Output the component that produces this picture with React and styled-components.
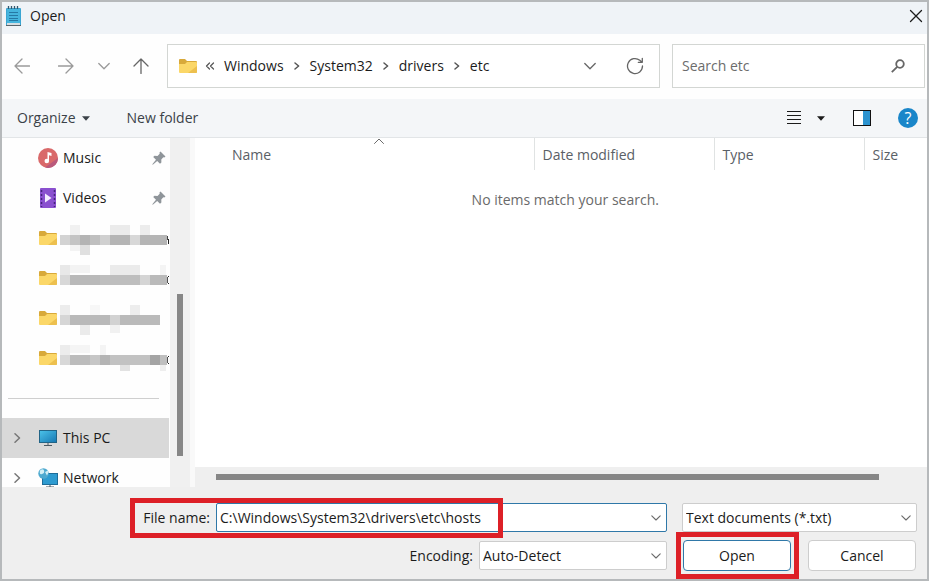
import React from 'react';
import styled, { createGlobalStyle } from 'styled-components';

const GlobalStyle = createGlobalStyle`
	* {
		box-sizing: border-box;
	}

	body {
		margin: 0;
		overflow: hidden;
	}

	body, button, input, select, table {
		font-family: 'Open Sans', 'Noto Sans', sans-serif;
		font-size: 14px;
		line-height: 20px;
		color: #1b1b1b;
	}

	button {
		padding: 0;
		border: none;
		background: none;
		cursor: pointer;
	}

	svg {
		display: block;
		flex: none;
	}
`;

const Dialog = styled.div`
	display: flex;
	flex-direction: column;
	height: 100vh;
	border: 2px solid #b6b9bb;
	background-color: #fefefe;
`;

const TitleBar = styled.header`
	display: flex;
	align-items: center;
	gap: 8px;
	height: 32px;
	padding: 0 4px 4px;
	background-color: #eff3f7;
`;

const Title = styled.h1`
	flex: 1;
	margin: 0;
	font-size: 14px;
	font-weight: 400;
`;

const NavBar = styled.nav`
	display: flex;
	align-items: center;
	gap: 12px;
	height: 65px;
	padding: 0 2px 2px 0;
`;

const NavButtons = styled.div`
	display: grid;
	grid-template-columns: 40px 48px 28px 46px;
	height: 44px;
	margin-right: -9px;
`;

const IconButton = styled.button`
	display: flex;
	align-items: center;
	justify-content: center;
	color: ${props => props.$color || '#1b1b1b'};
`;

const AddressBar = styled.div`
	display: flex;
	flex: 1;
	align-items: center;
	gap: 7px;
	height: 44px;
	padding: 0 15px 0 10px;
	border: 1px solid #d3d6d3;
	background-color: white;
	color: #555;
`;

const Breadcrumbs = styled.div`
	display: flex;
	align-items: center;
	gap: 10px;
	margin-left: 2px;
`;

const AddressActions = styled.div`
	display: flex;
	gap: 30px;
	margin-left: auto;
`;

const SearchBox = styled.label`
	display: flex;
	align-items: center;
	width: 253px;
	height: 44px;
	padding: 0 18px 0 9px;
	border: 1px solid #d3d6d3;
	background-color: white;
`;

const SearchInput = styled.input`
	flex: 1;
	min-width: 0;
	padding: 0;
	border: none;
	outline: none;
	background: none;

	&::placeholder {
		color: #6c6c6c;
		opacity: 1;
	}
`;

const Toolbar = styled.div`
	display: flex;
	align-items: center;
	height: 39px;
	padding: 0 9px 0 15px;
	border-bottom: 1px solid #e2e5e7;
	background-color: #f4f6f8;
`;

const ToolbarButton = styled.button`
	display: flex;
	align-items: center;
	gap: 6px;
	margin-right: 37px;
	color: #3b4248;
`;

const ToolbarIcons = styled.div`
	display: flex;
	align-items: center;
	gap: 27px;
	margin-left: auto;
`;

const ViewButton = styled(IconButton)`
	gap: 16px;
	padding-right: 1px;
`;

const Body = styled.div`
	display: flex;
	flex: 1;
	min-height: 0;
`;

const Sidebar = styled.aside`
	width: 168px;
	overflow: hidden;
`;

const SidebarItem = styled.button`
	display: grid;
	grid-template-columns: 10px 20px 1fr auto;
	align-items: center;
	column-gap: 16px;
	width: 167px;
	height: 40px;
	padding: 0 3px 0 10px;
	text-align: left;
	color: #777;
	background-color: ${props => (props.$selected ? '#d9d9d9' : 'transparent')};
`;

const ItemLabel = styled.span`
	margin-left: -11px;
	color: #1b1b1b;
`;

const HiddenItem = styled.div`
	display: flex;
	align-items: center;
	gap: 2px;
	width: 168px;
	height: 40px;
	padding-left: 36px;
`;

const Divider = styled.hr`
	width: 151px;
	height: 1px;
	margin: 20px 0 19px 6px;
	border: none;
	background-color: #cfcfcf;
`;

const VerticalTrack = styled.div`
	display: flex;
	flex-direction: column;
	justify-content: flex-end;
	align-items: center;
	width: 20px;
	padding-bottom: 31px;
	background-color: #f0f0f0;
`;

const VerticalThumb = styled.div`
	width: 6px;
	height: 51%;
	background-color: #868686;
`;

const FilePane = styled.main`
	display: flex;
	flex: 1;
	flex-direction: column;
	border-left: 5px solid #f9f9f9;
`;

const FileArea = styled.div`
	flex: 1;
	padding-left: 28px;
	background-color: white;
`;

const FileTable = styled.table`
	width: 100%;
	table-layout: fixed;
	border-collapse: collapse;
`;

const HeaderCell = styled.th`
	position: relative;
	width: ${props => props.$width || 'auto'};
	height: 32px;
	padding: 2px 8px 0;
	border-left: 1px solid ${props => (props.$width ? '#e0e3e3' : 'transparent')};
	font-weight: 400;
	text-align: left;
	color: #5a6066;
`;

const SortMark = styled.span`
	position: absolute;
	top: 0;
	left: 50%;
	transform: translateX(-50%);
	color: #6b6b6b;
`;

const EmptyCell = styled.td`
	padding: 20px 20px 0 0;
	text-align: center;
	color: #6a6a6a;
`;

const HorizontalTrack = styled.div`
	display: flex;
	align-items: center;
	height: 20px;
	padding: 0 48px 0 21px;
	background-color: #efefef;
`;

const HorizontalThumb = styled.div`
	flex: 1;
	height: 6px;
	background-color: #868686;
`;

const Footer = styled.footer`
	display: grid;
	grid-template-columns: 214px 1fr 235px;
	grid-template-rows: 29px 31px;
	row-gap: 8px;
	align-items: center;
	padding: 16px 10px 8px 0;
	background-color: #efefef;
`;

const FileNameGroup = styled.div`
	position: relative;
	display: grid;
	grid-column: 1 / 3;
	grid-template-columns: 214px 1fr;
	align-items: center;
	margin-right: 15px;
`;

const FieldLabel = styled.label`
	padding-right: 6px;
	text-align: right;
`;

const Field = styled.div`
	position: relative;
	display: flex;
	width: ${props => props.$width || 'auto'};
	height: 29px;
	border: 1px solid ${props => (props.$active ? '#2f78a8' : '#cdcdcd')};
	border-radius: 2px;
	background-color: white;
`;

const TextInput = styled.input`
	flex: 1;
	min-width: 0;
	padding: 0 3px;
	border: none;
	outline: none;
	background: none;
`;

const Select = styled.select`
	flex: 1;
	width: 100%;
	padding: 0 24px 0 3px;
	border: none;
	outline: none;
	appearance: none;
	background: none;
`;

const FieldArrow = styled.span`
	position: absolute;
	top: 10px;
	right: 5px;
	color: #6a6a6a;
	pointer-events: none;
`;

const ArrowButton = styled(IconButton)`
	width: 20px;
`;

const EncodingGroup = styled.div`
	display: flex;
	grid-column: 1 / 3;
	align-items: center;
	justify-content: flex-end;
	margin-right: 15px;
`;

const Actions = styled.div`
	display: grid;
	grid-template-columns: 1fr 1fr;
	column-gap: 17px;
	padding: 0 1px;
`;

const ActionSlot = styled.div`
	position: relative;
	display: grid;
`;

const ActionButton = styled.button`
	height: 31px;
	border: 1px solid ${props => (props.$primary ? '#2f78a8' : '#cdcdcd')};
	border-radius: 4px;
	background-color: white;
`;

const Highlight = styled.span`
	position: absolute;
	border: 5px solid #dd2027;
	pointer-events: none;
`;

const NameHighlight = styled(Highlight)`
	inset: -5px auto -6px 128px;
	width: 373px;
`;

const OpenHighlight = styled(Highlight)`
	inset: -8px -8px -8px -7px;
`;

const Stroke = ({ width, height, d, weight = 1.3 }) => (
	<svg
		width={width}
		height={height}
		viewBox={`0 0 ${width} ${height}`}
		fill="none"
		stroke="currentColor"
		strokeWidth={weight}
		strokeLinecap="round"
		strokeLinejoin="round"
		aria-hidden="true"
	>
		<path d={d} />
	</svg>
);

const ChevronDown = () => <Stroke width={12} height={8} d="M.8 1.500L6 6.700l5.200-5.200" weight={1.3} />;
const FieldChevron = () => <Stroke width={10} height={8} d="M.8 1.800L5 6l4.200-4.200" weight={1.1} />;
const ChevronRight = () => <Stroke width={6} height={10} d="M1 2l3.600 3L1 8" weight={1.5} />;
const TreeChevron = () => <Stroke width={10} height={10} d="M3 .8L7.500 5 3 9.200" weight={1.5} />;

const Caret = () => (
	<svg width="8" height="5" viewBox="0 0 8 5" fill="currentColor" aria-hidden="true">
		<path d="M0 .3h8L4 4.800z" />
	</svg>
);

const NotepadIcon = () => (
	<svg width="16" height="21" viewBox="0 0 16 21" aria-hidden="true">
		<rect x="0" y="2" width="15" height="18" rx="1" fill="#3aa5d2" />
		<rect x="1" y="3" width="13" height="14" fill="#45b4dd" />
		<rect x="1" y="17" width="13" height="2" fill="#d5dde1" />
		<path d="M0 19.500h15" stroke="#59636a" />
		<path d="M3 6.500h9M3 9.500h9M3 12.500h9M3 14.500h9" stroke="#2578a4" />
		<path d="M2.500 0v3M5.500 0v3M8.500 0v3M11.500 0v3" stroke="#31596f" strokeWidth="1.300" />
	</svg>
);

const FolderIcon = () => (
	<svg width="20" height="16" viewBox="0 0 20 16" aria-hidden="true">
		<path d="M1 2q0-1 1-1h5l2 2h9q1 0 1 1v3H1z" fill="#d8a93a" />
		<path d="M1 6h6l2-2h9q1 0 1 1v9q0 1-1 1H2q-1 0-1-1z" fill="#fbd768" />
		<path d="M19 8v6q0 1-1 1h-8z" fill="#edc04e" />
	</svg>
);

const MusicIcon = () => (
	<svg width="20" height="20" viewBox="0 0 20 20" aria-hidden="true">
		<circle cx="10" cy="10" r="10" fill="#d9696a" />
		<path d="M20 10a10 10 0 0 1-13 9.500z" fill="#b9597b" />
		<path d="M9.500 13V4l4 1v3l-2.500-.7V13z" fill="white" />
		<circle cx="8.800" cy="13" r="2.300" fill="white" />
	</svg>
);

const VideoIcon = () => (
	<svg width="20" height="20" viewBox="0 0 20 20" aria-hidden="true">
		<rect x="2" width="16" height="20" rx="1" fill="#8a50cf" />
		<path d="M3.500 2v17M16.500 2v17" stroke="#45227c" strokeWidth="1.500" strokeDasharray="2 2" />
		<path d="M7 5.500l6.500 4.500L7 14.500z" fill="#f4ecff" />
	</svg>
);

const PinIcon = () => (
	<svg width="14" height="14" viewBox="0 0 14 14" aria-hidden="true">
		<path d="M8.500 .5l5 5-1.200 1-1-.2-2 2.200.1 3-1.400 1.300-2.800-2.800L.8 13.700.3 13.200 4 8.800 1.200 6l1.300-1.300 3 .2 2.200-2.200-.2-1.200z" fill="#8f959a" />
	</svg>
);

const ComputerIcon = () => (
	<svg width="20" height="20" viewBox="0 0 20 20" aria-hidden="true">
		<defs>
			<linearGradient id="screen" x1="0" y1="0" x2="1" y2="1">
				<stop offset="0" stopColor="#4cc3ea" />
				<stop offset="1" stopColor="#1677b2" />
			</linearGradient>
		</defs>
		<rect x="1.500" y="2.500" width="17" height="12" fill="url(#screen)" stroke="#226486" />
		<path d="M10 15v2.500M6 17.500h8" stroke="#4b5962" />
	</svg>
);

const NetworkIcon = () => (
	<svg width="20" height="20" viewBox="0 0 20 20" aria-hidden="true">
		<rect x="4.500" y="5.500" width="15" height="11" fill="#2e9bd0" stroke="#1e6d99" />
		<path d="M12 17v2M8 19h8" stroke="#4b5962" />
		<circle cx="5.500" cy="5.500" r="5.200" fill="#4ea9cf" />
		<path d="M2 2.500q3-2.500 4 0T4 6Q1 7 2 2.500zM7 4l3-1.500q1 3-1 5z" fill="#d3eff5" />
	</svg>
);

const RefreshIcon = () => (
	<Stroke width={18} height={18} d="M16.500 9A7.500 7.500 0 1 1 13.800 3.300L16 5.200M16.300 1.300v4h-4" weight={1.3} />
);

const SearchIcon = () => (
	<svg width="15" height="14" viewBox="0 0 15 14" fill="none" stroke="#666" aria-hidden="true">
		<circle cx="9" cy="5" r="3.800" strokeWidth="1.800" />
		<path d="M6.200 7.800L.8 13.200" strokeWidth="1.800" />
	</svg>
);

const ListIcon = () => (
	<svg width="14" height="14" viewBox="0 0 14 14" stroke="#1b1b1b" aria-hidden="true">
		<path d="M0 .5h14M0 4.500h14M0 8.500h14M0 12.500h14" />
	</svg>
);

const PaneIcon = () => (
	<svg width="18" height="16" viewBox="0 0 18 16" aria-hidden="true">
		<rect x=".5" y=".5" width="17" height="15" fill="white" stroke="#111" />
		<rect x="10" y="1" width="7" height="14" fill="#2c93cf" />
	</svg>
);

const HelpBadge = styled.span`
	display: flex;
	align-items: center;
	justify-content: center;
	width: 20px;
	height: 20px;
	border-radius: 50%;
	background-color: #1a86c9;
	font-size: 16px;
	color: white;
`;

// Each entry is [x, y, width, height, shade] of one pixelated block,
// the dark specks past x = 106 are what sticks out of the mosaic
const hiddenNames = [
	[
		[10, 7, 10, 10, '#f1f1f1'], [50, 7, 20, 10, '#ebebeb'], [80, 7, 10, 10, '#ececec'],
		[0, 17, 10, 10, '#d3d3d3'], [10, 17, 10, 10, '#c4c4c4'], [20, 17, 10, 10, '#b4b4b4'],
		[30, 17, 10, 10, '#bfbfbf'], [40, 17, 10, 10, '#d0d0d0'], [50, 17, 20, 10, '#b5b5b5'],
		[70, 17, 10, 10, '#d8d8d8'], [80, 17, 27, 10, '#b5b5b5'],
		[10, 27, 10, 6, '#f3f3f3'], [20, 27, 10, 10, '#e0e0e0'],
		[107, 18, 1, 4, '#444'], [108, 21, 1, 5, '#222'],
	],
	[
		[0, 7, 10, 10, '#e8e8e8'], [10, 7, 20, 8, '#f3f3f3'], [50, 7, 30, 10, '#ebebeb'], [100, 7, 6, 10, '#f4f4f4'],
		[0, 17, 10, 10, '#d8d8d8'], [10, 17, 30, 10, '#b9b9b9'], [40, 17, 40, 10, '#bebebe'],
		[80, 17, 10, 10, '#d5d5d5'], [90, 17, 17, 10, '#bababa'],
		[107, 19, 1, 6, '#555'], [108, 18, 1, 1, '#222'], [108, 25, 1, 1, '#222'],
	],
	[
		[0, 7, 10, 10, '#ececec'], [30, 7, 10, 10, '#f7f7f7'], [70, 7, 10, 10, '#ededed'],
		[0, 17, 10, 10, '#d6d6d6'], [10, 17, 40, 10, '#b9b9b9'], [50, 17, 10, 10, '#d2d2d2'],
		[60, 17, 40, 10, '#bababa'], [20, 27, 10, 10, '#ebebeb'], [50, 27, 10, 8, '#f1f1f1'],
	],
	[
		[0, 7, 10, 10, '#ececec'], [10, 7, 20, 8, '#f5f5f5'], [40, 7, 6, 10, '#f4f4f4'],
		[0, 17, 10, 10, '#d8d8d8'], [10, 17, 20, 10, '#bcbcbc'], [30, 17, 10, 10, '#c6c6c6'],
		[40, 17, 10, 10, '#b4b4b4'], [50, 17, 40, 10, '#c2c2c2'], [90, 17, 10, 10, '#a4a4a4'],
		[100, 17, 7, 10, '#bfbfbf'], [60, 27, 10, 6, '#e2e2e2'], [100, 27, 6, 6, '#eee'],
		[107, 19, 1, 6, '#555'], [108, 18, 1, 1, '#222'], [108, 25, 1, 1, '#222'],
	],
];

const path = ['Windows', 'System32', 'drivers', 'etc'];

export default function App() {
	return (
		<>
			<GlobalStyle />
			<Dialog role="dialog" aria-labelledby="title">
				<TitleBar>
					<NotepadIcon />
					<Title id="title">Open</Title>
					<IconButton aria-label="Close">
						<Stroke width={14} height={14} d="M1.500 1.500l11 11M12.500 1.500l-11 11" />
					</IconButton>
				</TitleBar>

				<NavBar>
					<NavButtons>
						<IconButton aria-label="Back" $color="#9a9a9a">
							<Stroke width={16} height={16} d="M15.500 8H1M8 1L1 8l7 7" />
						</IconButton>
						<IconButton aria-label="Forward" $color="#9a9a9a">
							<Stroke width={16} height={16} d="M.5 8H15M8 1l7 7-7 7" />
						</IconButton>
						<IconButton aria-label="Recent locations" $color="#9a9a9a">
							<ChevronDown />
						</IconButton>
						<IconButton aria-label="Up" $color="#666">
							<Stroke width={16} height={16} d="M8 15.500V1M1 8l7-7 7 7" />
						</IconButton>
					</NavButtons>
					<AddressBar>
						<FolderIcon />
						<Stroke width={10} height={10} d="M4.500 2L1.500 5l3 3M8.500 2L5.500 5l3 3" weight={1.2} />
						<Breadcrumbs>
							{path.map((name, i) => (
								<React.Fragment key={name}>
									{i > 0 && <ChevronRight />}
									<button>{name}</button>
								</React.Fragment>
							))}
						</Breadcrumbs>
						<AddressActions>
							<IconButton aria-label="Previous locations" $color="#666">
								<ChevronDown />
							</IconButton>
							<IconButton aria-label="Refresh" $color="#666">
								<RefreshIcon />
							</IconButton>
						</AddressActions>
					</AddressBar>
					<SearchBox>
						<SearchInput type="text" placeholder="Search etc" aria-label="Search etc" />
						<SearchIcon />
					</SearchBox>
				</NavBar>

				<Toolbar>
					<ToolbarButton>
						Organize
						<Caret />
					</ToolbarButton>
					<ToolbarButton>New folder</ToolbarButton>
					<ToolbarIcons>
						<ViewButton aria-label="Change view">
							<ListIcon />
							<Caret />
						</ViewButton>
						<IconButton aria-label="Preview pane">
							<PaneIcon />
						</IconButton>
						<IconButton aria-label="Help">
							<HelpBadge>?</HelpBadge>
						</IconButton>
					</ToolbarIcons>
				</Toolbar>

				<Body>
					<Sidebar>
						<SidebarItem>
							<span />
							<MusicIcon />
							<ItemLabel>Music</ItemLabel>
							<PinIcon />
						</SidebarItem>
						<SidebarItem>
							<span />
							<VideoIcon />
							<ItemLabel>Videos</ItemLabel>
							<PinIcon />
						</SidebarItem>
						{hiddenNames.map((blocks, i) => (
							<HiddenItem key={i}>
								<FolderIcon />
								<svg width="110" height="40" viewBox="0 0 110 40" shapeRendering="crispEdges" aria-hidden="true">
									{blocks.map(([x, y, w, h, shade]) => (
										<rect key={`${x}-${y}`} x={x} y={y} width={w} height={h} fill={shade} />
									))}
								</svg>
							</HiddenItem>
						))}
						<Divider />
						<SidebarItem $selected>
							<TreeChevron />
							<ComputerIcon />
							<ItemLabel>This PC</ItemLabel>
						</SidebarItem>
						<SidebarItem>
							<TreeChevron />
							<NetworkIcon />
							<ItemLabel>Network</ItemLabel>
						</SidebarItem>
					</Sidebar>
					<VerticalTrack>
						<VerticalThumb />
					</VerticalTrack>
					<FilePane>
						<FileArea>
							<FileTable>
								<thead>
									<tr>
										<HeaderCell>
											Name
											<SortMark>
												<Stroke width={12} height={6} d="M1.500 5.500L6 1l4.500 4.500" weight={1} />
											</SortMark>
										</HeaderCell>
										<HeaderCell $width="180px">Date modified</HeaderCell>
										<HeaderCell $width="150px">Type</HeaderCell>
										<HeaderCell $width="63px">Size</HeaderCell>
									</tr>
								</thead>
								<tbody>
									<tr>
										<EmptyCell colSpan={4}>No items match your search.</EmptyCell>
									</tr>
								</tbody>
							</FileTable>
						</FileArea>
						<HorizontalTrack>
							<HorizontalThumb />
						</HorizontalTrack>
					</FilePane>
				</Body>

				<Footer>
					<FileNameGroup>
						<FieldLabel htmlFor="file-name">File name:</FieldLabel>
						<Field $active>
							<TextInput id="file-name" type="text" defaultValue="C:\Windows\System32\drivers\etc\hosts" />
							<ArrowButton aria-label="Recent file names" $color="#6a6a6a">
								<FieldChevron />
							</ArrowButton>
						</Field>
						<NameHighlight />
					</FileNameGroup>
					<Field>
						<Select aria-label="File type" defaultValue="txt">
							<option value="txt">Text documents (*.txt)</option>
							<option value="all">All files (*.*)</option>
						</Select>
						<FieldArrow>
							<FieldChevron />
						</FieldArrow>
					</Field>
					<EncodingGroup>
						<FieldLabel htmlFor="encoding">Encoding:</FieldLabel>
						<Field $width="188px">
							<Select id="encoding" defaultValue="auto">
								<option value="auto">Auto-Detect</option>
								<option value="utf8">UTF-8</option>
							</Select>
							<FieldArrow>
								<FieldChevron />
							</FieldArrow>
						</Field>
					</EncodingGroup>
					<Actions>
						<ActionSlot>
							<ActionButton $primary>Open</ActionButton>
							<OpenHighlight />
						</ActionSlot>
						<ActionButton>Cancel</ActionButton>
					</Actions>
				</Footer>
			</Dialog>
		</>
	);
}
